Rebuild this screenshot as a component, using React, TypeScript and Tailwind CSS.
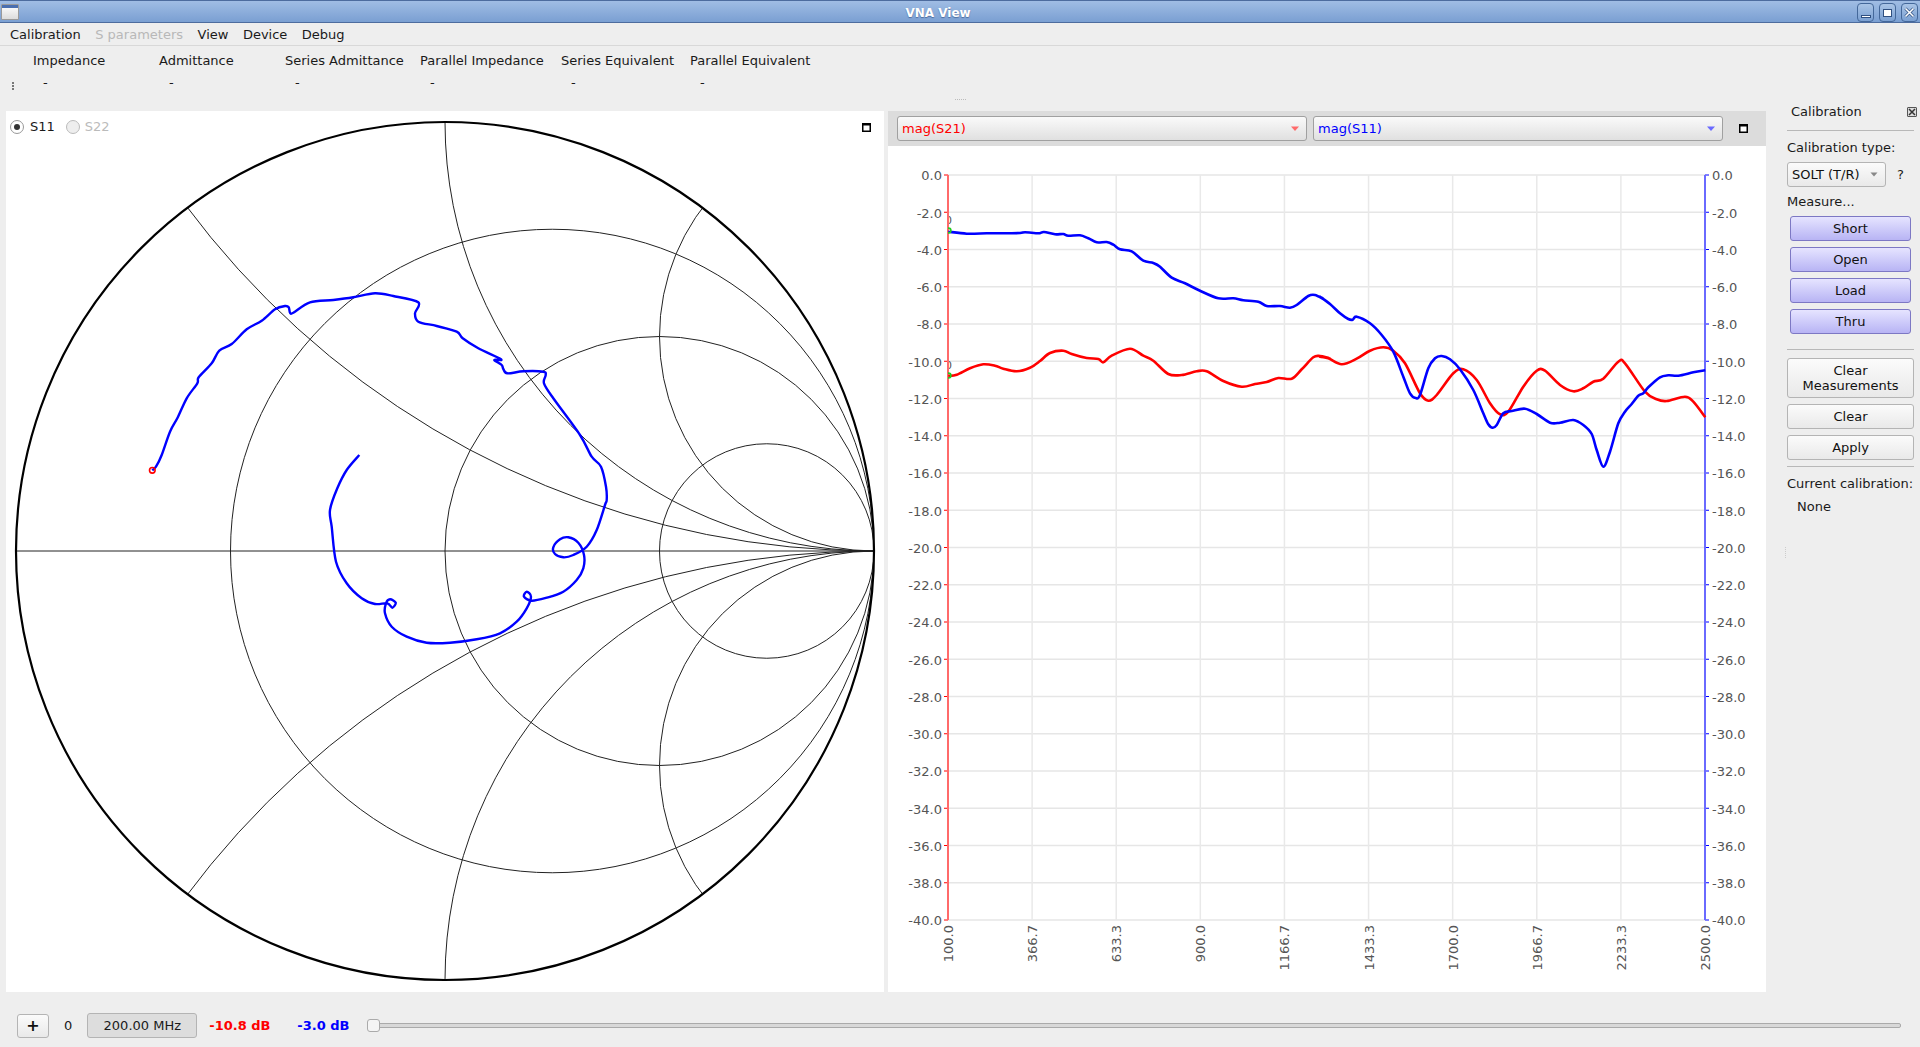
import React from "react";

type P = [number, number];
const font = { fontFamily: '"DejaVu Sans", sans-serif' };

function smooth(p: P[]): string {
  let d = `M${p[0][0]} ${p[0][1]}`;
  for (let i = 0; i < p.length - 1; i++) {
    const a = p[Math.max(i - 1, 0)], b = p[i], c = p[i + 1], e = p[Math.min(i + 2, p.length - 1)];
    const k = 0.16;
    d += ` C${(b[0] + (c[0] - a[0]) * k).toFixed(1)} ${(b[1] + (c[1] - a[1]) * k).toFixed(1)} ${(c[0] - (e[0] - b[0]) * k).toFixed(1)} ${(c[1] - (e[1] - b[1]) * k).toFixed(1)} ${c[0]} ${c[1]}`;
  }
  return d;
}

const smithTrace: P[] = [
  [152.3,470.3],[156,466.7],[161.7,455],[170,431.7],[177.3,418.3],[186.7,398.3],[197.3,383.3],[198.7,377.3],[211.7,363.3],[219.3,350.7],[231.7,344],[246.7,329.3],[261.7,320.7],[275,309.3],[285,306],[288.7,307.3],[290,312.7],[293.3,312.7],[310,302.3],[333.3,300],[353.3,297.3],[375,293.3],[393.3,296],[418.3,302.3],[415,313.3],[418.3,321.7],[436.7,326],[456.7,331.7],[462.7,338.3],[478.3,348.3],[501,359.3],[494.3,360],[501.7,365],[503.3,369],[507.3,373.3],[523.3,371.3],[543.3,371.7],[545.7,375],[544,383.3],[553.3,398.3],[580,435],[591.7,456.7],[601,466.7],[606,486.7],[606.7,500],[605,505],[596.7,530],[586.7,546.7],[573.3,555],[563.3,557.3],[555,554],[553.3,547.3],[560,539.3],[568.3,537.3],[578.3,542.7],[584,555],[583.3,568.3],[576.7,580],[563.3,591.7],[546.7,597.7],[531.7,600.7],[524,596.7],[526.7,591.7],[531,596.7],[526.7,608.3],[516.7,621.7],[500,633.3],[476.7,639.3],[450,642.7],[426.7,642.7],[406.7,636.7],[391.7,626.7],[385,613.3],[386,603.3],[390,599.3],[395.7,602.7],[392.3,607.7],[387.3,603.3],[375,604],[361.7,598.3],[346.7,583.3],[336,561.7],[331.7,526.7],[330,510],[337.3,488.3],[346.7,470],[359.3,455],
];

const z7 = (a: number[]): P[] => { const o: P[] = []; for (let i = 0; i < a.length; i += 2) o.push([+(940 + a[i] / 3).toFixed(1), +(200 + a[i + 1] / 3).toFixed(1)]); return o; };
const z8 = (a: number[]): P[] => { const o: P[] = []; for (let i = 0; i < a.length; i += 2) o.push([+(1320 + a[i] / 3).toFixed(1), +(280 + a[i + 1] / 3).toFixed(1)]); return o; };

const blueTrace: P[] = [
  ...z7([25,95,80,101,140,100,190,100,240,99,255,97,295,100,312,96,345,103,370,102,385,107,420,106,445,115,470,127,500,126,520,134,540,148,575,154,610,182,640,189,660,200,695,233,735,250,780,272,835,295,880,295,910,301,955,305,980,318,1020,318,1050,323,1070,315,1105,288,1125,285,1150,297]),
  ...z8([0,50,30,72,60,100,85,117,98,119,110,110,150,130,185,165,220,215,250,290,270,340,287,354,300,345,325,265,345,235,365,228,390,238,420,268,460,330,490,400,505,433,518,443,530,435,550,400,575,393,615,386,650,402,690,428,720,428,760,420,790,435,815,462,830,510,850,560,870,515,895,430,915,395,935,372,955,347,970,340,985,322,1020,292,1045,286,1075,287,1120,277,1156,271]),
];
const redTrace: P[] = [
  ...z7([25,528,50,524,90,505,130,493,165,497,190,506,230,514,270,503,300,483,330,459,370,452,395,462,440,474,475,477,490,487,515,467,570,446,610,467,640,482,685,522,725,525,770,514,800,514,850,543,905,560,945,552,980,546,1015,534,1055,536,1085,508,1120,472,1140,468,1170,475]),
  ...z8([0,230,25,235,65,253,110,236,150,212,190,202,220,212,255,250,300,340,325,362,350,345,400,280,430,268,470,300,510,370,540,403,565,395,610,320,650,272,675,272,720,315,760,334,790,325,820,305,850,296,895,245,915,250,975,335,1010,358,1040,363,1095,350,1120,365,1156,412]),
];

function SmithChart() {
  const cx = 445, cy = 551, r = 429;
  const rows = [0.25, 0.5, 0.75];
  const xs = [0.5, 1, 2];
  return (
    <svg width="878" height="881" viewBox="6 111 878 881" className="block">
      <defs>
        <clipPath id="unit"><circle cx={cx} cy={cy} r={r} /></clipPath>
      </defs>
      <g clipPath="url(#unit)" fill="none" stroke="#222" strokeWidth={1}>
        {rows.map((f) => (
          <circle key={f} cx={cx + r * f} cy={cy} r={r * (1 - f)} />
        ))}
        {xs.map((x) => (
          <React.Fragment key={x}>
            <circle cx={cx + r} cy={cy - r / x} r={r / x} />
            <circle cx={cx + r} cy={cy + r / x} r={r / x} />
          </React.Fragment>
        ))}
        <line x1={cx - r} y1={cy} x2={cx + r} y2={cy} stroke="#222" strokeWidth={1} />
      </g>
      <circle cx={cx} cy={cy} r={r} fill="none" stroke="#000" strokeWidth={2.2} />
      <path d={smooth(smithTrace)} fill="none" stroke="#0000ff" strokeWidth={2.4} strokeLinejoin="round" />
      <circle cx={152.3} cy={470.3} r={2.8} fill="none" stroke="#ff0000" strokeWidth={1.6} />
    </svg>
  );
}

function MagChart() {
  const left = 948, right = 1705, top = 175, bottom = 920;
  const dy = (bottom - top) / 20;
  const dx = (right - left) / 9;
  const ticks = Array.from({ length: 21 }, (_, i) => i);
  const xt = ["100.0", "366.7", "633.3", "900.0", "1166.7", "1433.3", "1700.0", "1966.7", "2233.3", "2500.0"];
  const txt = { fontFamily: '"DejaVu Sans", sans-serif', fontSize: 13, fill: "#555" } as const;
  return (
    <svg width="878" height="846" viewBox="888 146 878 846" className="block">
      <defs>
        <clipPath id="rightOfAxis"><rect x={948} y={146} width={60} height={400} /></clipPath>
      </defs>
      {ticks.map((i) => (
        <line key={i} x1={left} x2={right} y1={top + i * dy} y2={top + i * dy} stroke="#e6e6e6" strokeWidth={1.5} />
      ))}
      {xt.map((_, i) => (
        <line key={i} x1={left + i * dx} x2={left + i * dx} y1={top} y2={bottom} stroke="#e9e9e9" strokeWidth={1.5} />
      ))}
      {ticks.map((i) => (
        <React.Fragment key={i}>
          <line x1={left - 4} x2={left} y1={top + i * dy} y2={top + i * dy} stroke="#ff0000" strokeWidth={1} />
          <line x1={right} x2={right + 4} y1={top + i * dy} y2={top + i * dy} stroke="#0000ff" strokeWidth={1} />
          <text x={left - 6} y={top + i * dy + 5.4} textAnchor="end" {...txt}>{(-2 * i).toFixed(1)}</text>
          <text x={right + 7} y={top + i * dy + 5.4} {...txt}>{(-2 * i).toFixed(1)}</text>
        </React.Fragment>
      ))}
      <g clipPath="url(#rightOfAxis)">
        <text x={945} y={224} fontFamily='"DejaVu Sans", sans-serif' fontSize={11} fill="#555">0</text>
        <text x={945} y={369} fontFamily='"DejaVu Sans", sans-serif' fontSize={11} fill="#555">0</text>
      </g>
      <line x1={left} x2={left} y1={top} y2={bottom} stroke="#ff6a6a" strokeWidth={2} />
      <line x1={right} x2={right} y1={top} y2={bottom} stroke="#6a6aff" strokeWidth={2} />
      {xt.map((t, i) => (
        <text key={t} {...txt} textAnchor="end" transform={`translate(${left + i * dx + 5} ${bottom + 5}) rotate(-90)`}>{t}</text>
      ))}
      <path d={smooth(redTrace)} fill="none" stroke="#ff0000" strokeWidth={2.6} />
      <path d={smooth(blueTrace)} fill="none" stroke="#0000ff" strokeWidth={2.6} />
      <g clipPath="url(#rightOfAxis)">
        <circle cx={948.5} cy={230.5} r={2.4} fill="none" stroke="#22cc22" strokeWidth={1.6} />
        <circle cx={948.5} cy={375.5} r={2.4} fill="none" stroke="#22cc22" strokeWidth={1.6} />
      </g>
    </svg>
  );
}

function Combo({ label, color, arrow }: { label: string; color: string; arrow: string }) {
  return (
    <div className="flex h-[25px] flex-1 items-center justify-between rounded-[3px] border border-[#a0a0a0] bg-gradient-to-b from-[#fafafa] to-[#e0e0e0] pl-[4px] pr-[6px]">
      <span className={color}>{label}</span>
      <svg width="10" height="6" viewBox="0 0 10 6"><path d="M1 0.5h8L5 5z" className={arrow} /></svg>
    </div>
  );
}

function WinBtn({ children }: { children: React.ReactNode }) {
  return (
    <div className="flex h-[19px] w-[17px] items-center justify-center rounded-[4px] border border-[#44689a] bg-gradient-to-b from-[#a9c4e6] to-[#7ba0d2]">
      {children}
    </div>
  );
}

function MaxIcon() {
  return (
    <svg width="9" height="9" viewBox="0 0 9 9" className="block">
      <rect x="0" y="0" width="9" height="9" fill="#000" />
      <rect x="1.5" y="2.5" width="6" height="5" fill="#fff" />
    </svg>
  );
}

function PurpleBtn({ children }: { children: React.ReactNode }) {
  return (
    <div className="mx-[3px] flex h-[25px] items-center justify-center rounded-[3px] border border-[#7d78c4] bg-gradient-to-b from-[#e6e4ff] to-[#b8b4f4] text-[#111]">
      {children}
    </div>
  );
}

function PlainBtn({ children, tall }: { children: React.ReactNode; tall?: boolean }) {
  return (
    <div className={`flex ${tall ? "h-[40px]" : "h-[25px]"} items-center justify-center rounded-[3px] border border-[#b4b4b4] bg-gradient-to-b from-[#fbfbfb] to-[#e9e9e9] text-center leading-[15px] text-[#111]`}>
      {children}
    </div>
  );
}

export default function App() {
  const head = [
    { t: "Impedance", x: "w-[126px]", pl: "pl-[33px]", d: "pl-[43px]" },
    { t: "Admittance", x: "w-[126px]", pl: "pl-[33px]", d: "pl-[43px]" },
    { t: "Series Admittance", x: "w-[155px]", pl: "pl-[33px]", d: "pl-[43px]" },
    { t: "Parallel Impedance", x: "w-[141px]", pl: "pl-[13px]", d: "pl-[23px]" },
    { t: "Series Equivalent", x: "w-[129px]", pl: "pl-[13px]", d: "pl-[23px]" },
    { t: "Parallel Equivalent", x: "w-[140px]", pl: "pl-[13px]", d: "pl-[23px]" },
  ];
  return (
    <div className="flex h-[1047px] w-[1920px] flex-col overflow-hidden bg-[#eeeeee] text-[13px] text-[#1a1a1a]" style={font}>
      {/* title bar */}
      <div className="relative flex h-[23px] shrink-0 items-center justify-center border-y border-[#4d6c9e] bg-gradient-to-b from-[#a0bde4] to-[#7a9fd2] pr-[44px] pt-[3px]">
        <span className="text-[12px] font-bold text-white [text-shadow:0_1px_1px_#4d6c9e]">VNA View</span>
        <div className="absolute left-[1px] top-[3px] flex h-[16px] w-[18px] flex-col overflow-hidden rounded-[1px] border border-[#9a9a9a] bg-gradient-to-b from-white to-[#dcdcdc]">
          <div className="h-[3px] shrink-0 bg-[#4a6fb0]" />
        </div>
        <div className="absolute right-[2px] top-[2px] flex gap-[5px]">
          <WinBtn><div className="mt-[8px] h-[3px] w-[10px] border border-[#2f4f80] bg-white" /></WinBtn>
          <WinBtn><div className="h-[8px] w-[9px] border border-[#2f4f80] bg-white" /></WinBtn>
          <WinBtn>
            <svg width="11" height="11" viewBox="0 0 11 11"><path d="M1.5 1.5l8 8M9.5 1.5l-8 8" stroke="#2f4f80" strokeWidth="3" /><path d="M1.5 1.5l8 8M9.5 1.5l-8 8" stroke="#fff" strokeWidth="1.6" /></svg>
          </WinBtn>
        </div>
      </div>
      {/* menu */}
      <div className="flex h-[23px] shrink-0 items-center gap-[14.5px] border-b border-[#d8d8d8] pl-[10px] pt-[2px]">
        <span>Calibration</span>
        <span className="text-[#b8b8b8]">S parameters</span>
        <span>View</span>
        <span>Device</span>
        <span>Debug</span>
      </div>
      {/* table */}
      <div className="relative h-[65px] shrink-0">
        <div className="flex pt-[5px]">
          {head.map((h) => (
            <div key={h.t} className={`${h.x} ${h.pl} shrink-0 whitespace-nowrap`}>{h.t}</div>
          ))}
        </div>
        <div className="flex pt-[2px]">
          {head.map((h) => (
            <div key={h.t} className={`${h.x} ${h.d} shrink-0`}>-</div>
          ))}
        </div>
        <div className="absolute left-[12px] top-[36px] flex flex-col gap-[1px]">
          <div className="h-[2px] w-[2px] bg-[#777]" />
          <div className="h-[2px] w-[2px] bg-[#777]" />
          <div className="h-[2px] w-[2px] bg-[#777]" />
        </div>
        <div className="absolute left-[955px] top-[53px] flex gap-[1px]">
          {[0, 1, 2, 3, 4, 5].map((i) => <div key={i} className="h-px w-px bg-[#bbb]" />)}
        </div>
      </div>
      {/* main */}
      <div className="flex h-[881px] shrink-0 pl-[6px]">
        {/* Smith panel */}
        <div className="relative h-[881px] w-[878px] shrink-0 bg-white">
          <SmithChart />
          <div className="absolute left-[4px] top-[6px] flex items-center gap-[6px]">
            <div className="flex h-[14px] w-[14px] items-center justify-center rounded-full border border-[#999] bg-white">
              <div className="h-[6px] w-[6px] rounded-full bg-[#333]" />
            </div>
            <span>S11</span>
            <div className="ml-[5px] h-[14px] w-[14px] rounded-full border border-[#bbb] bg-[#eee]" />
            <span className="-ml-[1px] text-[#bbb]">S22</span>
          </div>
          <div className="absolute right-[13px] top-[12px]"><MaxIcon /></div>
        </div>
        {/* Right chart panel */}
        <div className="ml-[4px] flex w-[878px] shrink-0 flex-col">
          <div className="flex h-[35px] shrink-0 items-center bg-[#dcdcdc] pl-[9px]">
            <div className="flex w-[826px] gap-[6px]">
              <Combo label="mag(S21)" color="text-[#ff0000]" arrow="fill-[#ff6a6a]" />
              <Combo label="mag(S11)" color="text-[#0000ff]" arrow="fill-[#6a6aff]" />
            </div>
            <div className="ml-[16px]"><MaxIcon /></div>
          </div>
          <div className="flex-1 bg-white">
            <MagChart />
          </div>
        </div>
        {/* Calibration dock */}
        <div className="relative flex flex-1 flex-col pl-[21px] pr-[6px]">
          <div className="-mt-[9px] flex h-[19px] shrink-0 items-center justify-between pl-[4px]">
            <span>Calibration</span>
            <div className="-mr-[3px] flex h-[10px] w-[10px] items-center justify-center rounded-[1px] border border-[#555] bg-[#ddd]">
              <svg width="8" height="8" viewBox="0 0 8 8"><path d="M1 1l6 6M7 1L1 7" stroke="#333" strokeWidth="1.5" /></svg>
            </div>
          </div>
          <div className="mt-[9px] h-px shrink-0 bg-[#b8b8b8]" />
          <div className="mt-[9px] leading-[16px]">Calibration type:</div>
          <div className="mt-[6px] flex items-center gap-[11px]">
            <div className="flex h-[25px] w-[99px] items-center justify-between rounded-[3px] border border-[#b4b4b4] bg-gradient-to-b from-[#fbfbfb] to-[#e9e9e9] pl-[4px] pr-[7px]">
              <span className="text-[#111]">SOLT (T/R)</span>
              <svg width="8" height="5" viewBox="0 0 8 5"><path d="M0.5 0.5h7L4 4.5z" fill="#888" /></svg>
            </div>
            <span>?</span>
          </div>
          <div className="mt-[7px] leading-[16px]">Measure...</div>
          <div className="mt-[6px] flex flex-col gap-[6px]">
            <PurpleBtn>Short</PurpleBtn>
            <PurpleBtn>Open</PurpleBtn>
            <PurpleBtn>Load</PurpleBtn>
            <PurpleBtn>Thru</PurpleBtn>
          </div>
          <div className="mt-[15px] h-px shrink-0 bg-[#b8b8b8]" />
          <div className="mt-[8px] flex flex-col gap-[6px]">
            <PlainBtn tall>Clear<br />Measurements</PlainBtn>
            <PlainBtn>Clear</PlainBtn>
            <PlainBtn>Apply</PlainBtn>
          </div>
          <div className="mt-[6px] h-px shrink-0 bg-[#b8b8b8]" />
          <div className="mt-[9px] whitespace-nowrap leading-[16px]">Current calibration:</div>
          <div className="mt-[7px] pl-[10px] leading-[16px]">None</div>
          <div className="absolute left-[19px] top-[436px] flex flex-col gap-[1px]">
            {[0, 1, 2, 3, 4, 5].map((i) => <div key={i} className="h-px w-px bg-[#ccc]" />)}
          </div>
        </div>
      </div>
      {/* bottom bar */}
      <div className="flex h-[55px] shrink-0 items-center pl-[17px] pr-[19px] pt-[12px]">
        <div className="flex h-[24px] w-[32px] items-center justify-center rounded-[3px] border border-[#b4b4b4] bg-gradient-to-b from-[#fbfbfb] to-[#e9e9e9] text-[16px] font-bold text-[#111]">+</div>
        <span className="ml-[15px]">0</span>
        <div className="ml-[15px] flex h-[25px] w-[110px] items-center justify-center rounded-[3px] border border-[#b4b4b4] bg-[#dddddd]">200.00 MHz</div>
        <span className="ml-[12px] w-[88px] font-bold text-[#ff0000]">-10.8 dB</span>
        <span className="w-[70px] font-bold text-[#0000ff]">-3.0 dB</span>
        <div className="relative flex h-[13px] flex-1 items-center">
          <div className="h-[5px] w-full rounded-[2px] border border-[#aaaaaa] bg-[#d8d8d8]" />
          <div className="absolute left-0 top-0 h-[13px] w-[13px] rounded-[3px] border border-[#aaa] bg-[#f4f4f4]" />
        </div>
      </div>
    </div>
  );
}
